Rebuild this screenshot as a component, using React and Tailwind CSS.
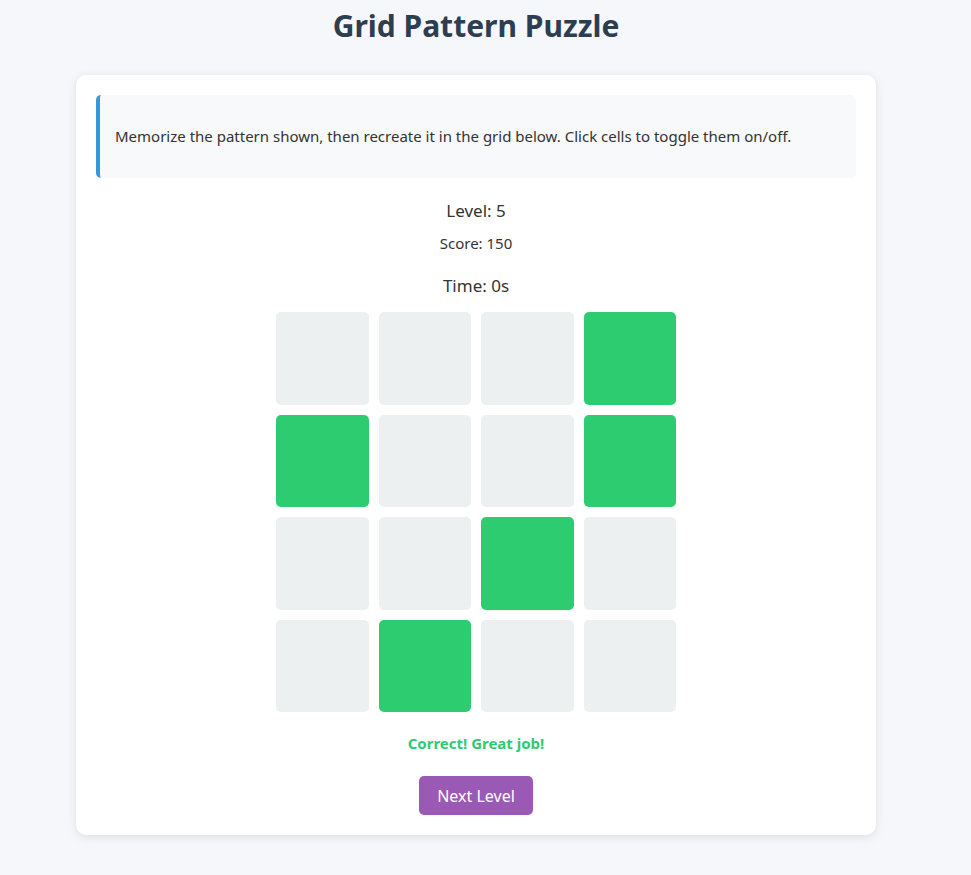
const PATTERN = [
  [0, 0, 0, 1],
  [1, 0, 0, 1],
  [0, 0, 1, 0],
  [0, 1, 0, 0],
];

export default function App() {
  return (
    <div
      className="min-h-[875px] bg-[#f5f7fa] text-[#333]"
      style={{ fontFamily: '"Noto Sans", "Open Sans", sans-serif' }}
    >
      {/* page content is laid out as if a scrollbar took the right edge */}
      <div className="w-[952px] pb-10">
        <h1 className="pt-[7px] text-center text-[30px] leading-[38px] font-bold text-[#2c3e50]">
          Grid Pattern Puzzle
        </h1>

        <div className="mx-auto mt-[30px] w-[800px] rounded-[10px] bg-white p-5 shadow-[0_2px_10px_rgba(0,0,0,0.1)]">
          <div className="rounded-[5px] border-l-4 border-[#3498db] bg-[#f8f9fa] px-[15px] py-[31px]">
            <p className="text-[15px] leading-[21px] text-[#333]">
              Memorize the pattern shown, then recreate it in the grid below. Click cells to toggle them on/off.
            </p>
          </div>

          <div className="mt-[21px] text-center text-[17px] leading-[24px]">Level: 5</div>
          <div className="mt-[10px] text-center text-[15px] leading-[20px]">Score: 150</div>
          <div className="mt-[21px] text-center text-[17px] leading-[24px]">Time: 0s</div>

          <div className="mx-auto mt-[14px] grid w-[400px] grid-cols-4 gap-[10px]">
            {PATTERN.flat().map((on, i) => (
              <div
                key={i}
                className={`h-[92.5px] rounded-[5px] ${on ? 'bg-[#2ecc71]' : 'bg-[#ecf0f1]'}`}
              />
            ))}
          </div>

          <div className="mt-[21px] text-center text-[15px] leading-[20px] font-bold text-[#2ecc71]">
            Correct! Great job!
          </div>

          <div className="mt-[23px] flex justify-center">
            <button className="h-[39px] w-[114px] rounded-[5px] bg-[#9b59b6] text-[16px] text-white">
              Next Level
            </button>
          </div>
        </div>
      </div>
    </div>
  );
}
